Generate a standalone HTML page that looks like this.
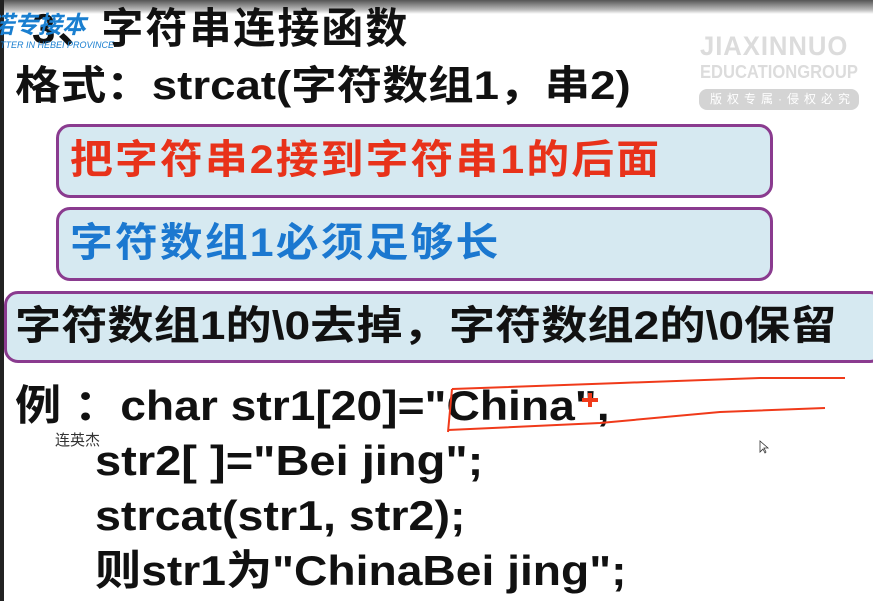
<!DOCTYPE html>
<html><head><meta charset="utf-8"><style>
body{margin:0;width:873px;height:601px;overflow:hidden;background:#fff;position:relative;font-family:"Liberation Sans","Noto Sans CJK SC",sans-serif;font-weight:bold;color:#111}
.t{position:absolute;white-space:nowrap;transform-origin:0 0;line-height:1}
.box{position:absolute;border:3px solid #8a3b8f;border-radius:14px;background:#d6e9f1;box-sizing:border-box}
</style></head><body>
<div style="position:absolute;left:0;top:0;width:873px;height:14px;background:linear-gradient(#555,#bbb 70%,#fff)"></div>
<div style="position:absolute;left:0;top:0;width:4px;height:601px;background:#222"></div>
<div class="t" style="left:32px;top:8px;font-size:42px;letter-spacing:2px">3、字符串连接函数</div>
<div class="t" style="left:-10px;top:14px;font-size:24px;color:#1a7fd0;font-style:italic">诺专接本</div>
<div class="t" style="left:0;top:41px;font-size:9px;color:#1a7fd0;font-style:italic;font-weight:normal">TTER IN HEBEI PROVINCE</div>
<div class="t" style="left:15px;top:66px;font-size:40px;transform:scaleX(1.14)">格式：strcat(字符数组1，串2)</div>
<div class="t" style="left:700px;top:33px;font-size:27px;color:#dcdcdc;letter-spacing:1px;transform:scaleX(0.95)">JIAXINNUO</div>
<div class="t" style="left:700px;top:63px;font-size:18px;color:#dcdcdc;transform:scaleX(0.92)">EDUCATIONGROUP</div>
<div style="position:absolute;left:699px;top:89px;width:160px;height:21px;border-radius:8px;background:#d4d4d4"></div>
<div class="t" style="left:710px;top:93px;font-size:12px;color:#fff;letter-spacing:5px;font-weight:normal">版权专属·侵权必究</div>
<div class="box" style="left:56px;top:124px;width:717px;height:74px"></div>
<div class="t" style="left:70px;top:140px;font-size:40px;color:#e8321a;letter-spacing:2px;transform:scaleX(1.07)">把字符串2接到字符串1的后面</div>
<div class="box" style="left:56px;top:207px;width:717px;height:74px"></div>
<div class="t" style="left:70px;top:223px;font-size:40px;color:#1b78d0;letter-spacing:2px;transform:scaleX(1.07)">字符数组1必须足够长</div>
<div class="box" style="left:4px;top:291px;width:880px;height:72px"></div>
<div class="t" style="left:15px;top:306px;font-size:40px;transform:scaleX(1.155)">字符数组1的\0去掉，字符数组2的\0保留</div>
<div class="t" style="left:15px;top:385px;font-size:42px;transform:scaleX(1.1)">例 ：char str1[20]="China",</div>
<div class="t" style="left:55px;top:433px;font-size:15px;font-weight:normal;color:#333">连英杰</div>
<div class="t" style="left:95px;top:440px;font-size:42px;transform:scaleX(1.12)">str2[ ]="Bei jing";</div>
<div class="t" style="left:95px;top:495px;font-size:42px;transform:scaleX(1.11)">strcat(str1, str2);</div>
<div class="t" style="left:95px;top:550px;font-size:42px;transform:scaleX(1.1)">则str1为"ChinaBei jing";</div>
<svg style="position:absolute;left:0;top:0" width="873" height="601">
<g fill="none" stroke="#f03a1a" stroke-width="2">
<path d="M452 389 L620 383 L760 378 L845 378"/>
<path d="M452 389 L448 432"/>
<path d="M448 430 L600 423 L720 412 L825 408"/>
</g>
<path d="M582 398h6v-5h4v5h6v4h-6v5h-4v-5h-6z" fill="#f03a1a"/>
<path d="M760 441v11l3-3 2 4 1-1-2-4h4z" fill="#fff" stroke="#333" stroke-width="0.8"/>
</svg>
</body></html>
